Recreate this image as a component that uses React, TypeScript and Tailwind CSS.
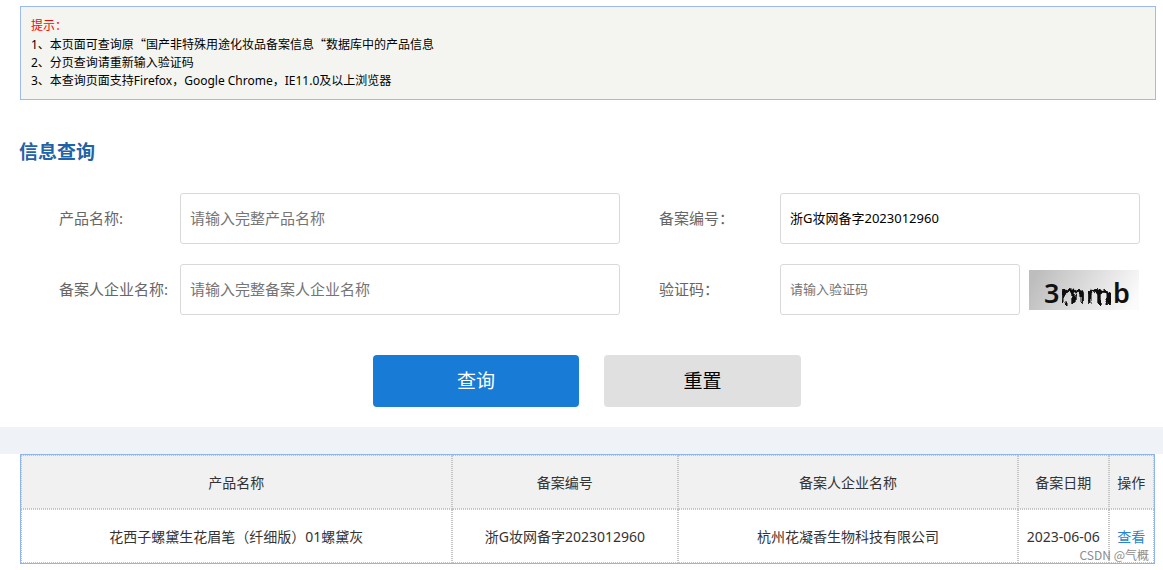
import { useState } from 'react';
import type { FormEvent, ReactNode } from 'react';

const tableColumns = [
  { title: '产品名称', width: 'w-[38%]' },
  { title: '备案编号', width: 'w-[20%]' },
  { title: '备案人企业名称', width: 'w-[30%]' },
  { title: '备案日期', width: 'w-[8%]' },
  { title: '操作', width: 'w-[4%]' },
];

const records = [
  {
    product: '花西子螺黛生花眉笔（纤细版）01螺黛灰',
    code: '浙G妆网备字2023012960',
    company: '杭州花凝香生物科技有限公司',
    date: '2023-06-06',
  },
];

const fieldClass =
  'h-[51px] w-full min-w-0 rounded-[3px] border border-[#d9d9d9] bg-white px-[9px] pb-0.5 text-black outline-none placeholder:text-[#757575] focus:border-[#187cd6]';

const cellClass = 'h-[54px] border border-dotted border-[#c4c4c4] p-0 pt-0.5';

function FieldLabel({ htmlFor, children }: { htmlFor: string; children: ReactNode }) {
  return (
    <label htmlFor={htmlFor} className="pl-[39px] text-[15px] whitespace-nowrap text-[#666]">
      {children}
    </label>
  );
}

// Full-width quotation mark, always taken from the CJK face.
function Quote() {
  return <span className="font-['Noto_Sans_CJK_SC',sans-serif]">“</span>;
}

function Captcha() {
  return (
    <svg
      viewBox="0 0 110 40"
      className="h-10 w-[110px] shrink-0 overflow-visible"
      role="img"
      aria-label="验证码图片"
    >
      <defs>
        <linearGradient id="captcha-bg" x1="0" y1="0.4" x2="1" y2="0.6">
          <stop offset="0" stopColor="#bdbdbd" />
          <stop offset="1" stopColor="#fbfbfb" />
        </linearGradient>
        <filter id="captcha-ripple" x="-5%" y="-10%" width="110%" height="120%">
          <feTurbulence type="fractalNoise" baseFrequency="0.3 0.12" numOctaves="1" seed="4" result="noise" />
          <feDisplacementMap in="SourceGraphic" in2="noise" scale="9" xChannelSelector="R" yChannelSelector="G" />
        </filter>
      </defs>
      <rect width="110" height="40" fill="url(#captcha-bg)" />
      <g fontFamily="'Noto Sans', sans-serif" fontSize="27" fontWeight="600" fill="#111">
        <text x="15" y="33">3</text>
        <text x="31" y="34" filter="url(#captcha-ripple)">mm</text>
        <text x="84" y="33">b</text>
      </g>
    </svg>
  );
}

export default function App() {
  const [product, setProduct] = useState('');
  const [company, setCompany] = useState('');
  const [code, setCode] = useState('浙G妆网备字2023012960');
  const [captcha, setCaptcha] = useState('');

  const submit = (event: FormEvent) => event.preventDefault();
  const reset = () => {
    setProduct('');
    setCompany('');
    setCode('');
    setCaptcha('');
  };

  return (
    <div lang="zh-CN" className="bg-white pt-1.5 font-['Noto_Sans','Noto_Sans_CJK_SC',sans-serif]">
      <section className="mr-[7px] ml-5 border border-[#9dbbec] bg-[#f4f5f0] px-[10px] pt-[10px] pb-[9px] text-xs leading-[18px] text-black">
        <p className="text-[#f00]">提示：</p>
        <p>
          1、本页面可查询原<Quote />国产非特殊用途化妆品备案信息<Quote />数据库中的产品信息
        </p>
        <p>2、分页查询请重新输入验证码</p>
        <p>3、本查询页面支持Firefox，Google Chrome，IE11.0及以上浏览器</p>
      </section>

      <form onSubmit={submit} className="pt-9 pb-5">
        <h1 className="ml-[19px] text-[19px] leading-[32px] font-bold text-[#1f63a8]">信息查询</h1>

        <div className="mt-[25px] mr-[23px] ml-5 grid grid-cols-[160px_minmax(0,440fr)_160px_minmax(0,360fr)] items-center gap-y-5">
          <FieldLabel htmlFor="product">产品名称:</FieldLabel>
          <input
            id="product"
            type="text"
            className={`${fieldClass} text-[15px]`}
            placeholder="请输入完整产品名称"
            value={product}
            onChange={(e) => setProduct(e.target.value)}
          />
          <FieldLabel htmlFor="code">备案编号：</FieldLabel>
          <input
            id="code"
            type="text"
            className={`${fieldClass} text-[13px]`}
            value={code}
            onChange={(e) => setCode(e.target.value)}
          />
          <FieldLabel htmlFor="company">备案人企业名称:</FieldLabel>
          <input
            id="company"
            type="text"
            className={`${fieldClass} text-[15px]`}
            placeholder="请输入完整备案人企业名称"
            value={company}
            onChange={(e) => setCompany(e.target.value)}
          />
          <FieldLabel htmlFor="captcha">验证码：</FieldLabel>
          <div className="flex items-center gap-[9px] pr-px">
            <input
              id="captcha"
              type="text"
              className={`${fieldClass} text-[13px]`}
              placeholder="请输入验证码"
              value={captcha}
              onChange={(e) => setCaptcha(e.target.value)}
            />
            <Captcha />
          </div>
        </div>

        <div className="mt-10 mr-[9px] ml-5 flex justify-center gap-[25px] text-[19px]">
          <button type="submit" className="h-[52px] w-[206px] cursor-pointer rounded bg-[#187cd6] text-white">
            查询
          </button>
          <button
            type="button"
            onClick={reset}
            className="h-[52px] w-[197px] cursor-pointer rounded bg-[#e0e0e0] text-black"
          >
            重置
          </button>
        </div>
      </form>

      <div className="h-[27px] bg-[#eff3f7]" />

      <div className="relative mr-2 ml-5">
        <table className="w-full table-fixed border-separate border-spacing-0 border border-[#8fb5ea] text-center text-sm text-[#333]">
          <thead className="bg-[#f1f1f1]">
            <tr>
              {tableColumns.map((column) => (
                <th key={column.title} scope="col" className={`${column.width} ${cellClass} font-normal`}>
                  {column.title}
                </th>
              ))}
            </tr>
          </thead>
          <tbody>
            {records.map((record) => (
              <tr key={record.code}>
                <td className={cellClass}>{record.product}</td>
                <td className={cellClass}>{record.code}</td>
                <td className={cellClass}>{record.company}</td>
                <td className={`${cellClass} whitespace-nowrap`}>{record.date}</td>
                <td className={cellClass}>
                  <a href="#detail" className="text-[#2a84d0]">
                    查看
                  </a>
                </td>
              </tr>
            ))}
          </tbody>
        </table>
        <span className="pointer-events-none absolute right-1.5 bottom-0 font-['Noto_Sans_CJK_SC',sans-serif] text-xs leading-[18px] text-[#8c8c8c]">
          CSDN @气概
        </span>
      </div>
    </div>
  );
}
